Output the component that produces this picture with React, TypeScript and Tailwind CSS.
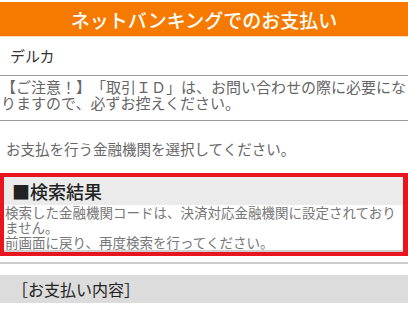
import React from "react";

const jp = { fontFamily: '"Noto Sans CJK JP", "Noto Sans", sans-serif' };

export default function App() {
  return (
    <div className="w-[408px] h-[313px] overflow-hidden bg-white [text-spacing-trim:space-all]" style={jp}>
      <div className="h-[2px] bg-white" />
      <div className="h-[35px] bg-[#f77a00] flex items-center justify-center text-white text-[19px] font-medium leading-none border-b border-[#fbd9b8]">
        ネットバンキングでのお支払い
      </div>
      <div className="h-[39px] flex items-center pl-[10px] text-[15px] text-[#333] border-b border-[#9a9a9a]">
        デルカ
      </div>
      <div className="pt-[3px] pb-[9px] pl-[1px] text-[15px] leading-[16px] text-[#666] border-b border-[#9a9a9a] [text-spacing-trim:space-all]">
        【ご注意！】「取引ＩＤ」は、お問い合わせの際に必要になりますので、必ずお控えください。
      </div>
      <div className="h-[52px] flex items-center pl-[6px] pt-[4px] text-[14.5px] text-[#666]">
        お支払を行う金融機関を選択してください。
      </div>
      <div className="border-[4px] border-[#e8151e] border-r-[5px]">
        <div className="h-[28px] bg-[#ebebeb] flex items-center pl-[8px] text-[18px] text-[#222] font-medium leading-none">
          ■検索結果
        </div>
        <div className="pl-[1px] text-[13.5px] leading-[15px] text-[#777]">
          検索した金融機関コードは、決済対応金融機関に設定されておりません。
          <br />
          前画面に戻り、再度検索を行ってください。
        </div>
        <div className="h-[2px] bg-[#cfcfcf]" />
      </div>
      <div className="h-[6px]" />
      <div className="h-[2px] bg-[#cccccc]" />
      <div className="h-[11px]" />
      <div className="h-[28px] bg-[#dcdcdc] flex items-center pl-[12px] text-[16px] text-[#222] leading-none [text-spacing-trim:space-all]">
        ［お支払い内容］
      </div>
    </div>
  );
}
